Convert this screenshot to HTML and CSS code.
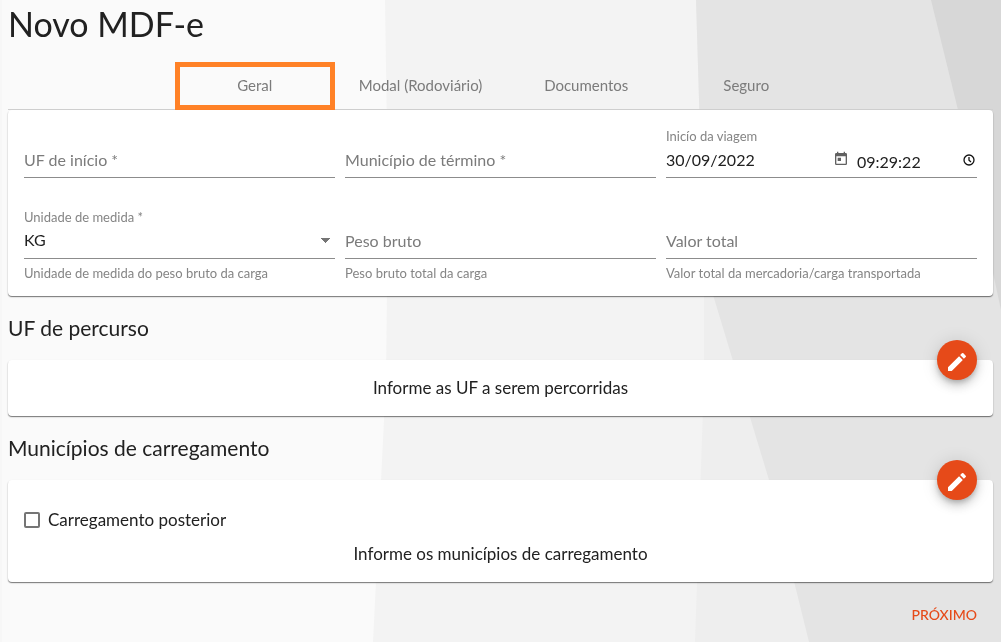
FILE: index.html
```html
<!DOCTYPE html>
<html lang="pt-BR">
<head>
<meta charset="utf-8">
<meta name="viewport" content="width=device-width, initial-scale=1">
<title>Novo MDF-e</title>
<link rel="stylesheet" href="styles.css">
</head>
<body>
<svg class="backdrop" viewBox="0 0 1001 642" preserveAspectRatio="none" aria-hidden="true">
  <rect width="1001" height="642" fill="#fafafa"/>
  <rect width="2" height="642" fill="#f7f7f7"/>
  <path fill="#f3f3f3" d="M385 0 388 200 386 380 373 642H1001V0Z"/>
  <path fill="#eeeeee" d="M696 0 704 265 704 380 695 642H1001V0Z"/>
  <path fill="#e4e4e4" d="M696 0 704 265 769 480 809 642H1001V0Z"/>
  <path fill="#d7d7d7" d="M931 0 958 110 1001 310V0Z"/>
</svg>
<main class="page">
  <h1 class="title">Novo MDF-e</h1>
  <nav class="tabs" role="tablist">
    <button class="tab tab-marked" type="button" role="tab" aria-selected="true">Geral</button>
    <button class="tab" type="button" role="tab">Modal (Rodoviário)</button>
    <button class="tab" type="button" role="tab">Documentos</button>
    <button class="tab" type="button" role="tab">Seguro</button>
  </nav>

  <form class="card fields">
    <div class="field">
      <div class="label"></div>
      <div class="control"><input class="input" type="text" placeholder="UF de início *" aria-label="UF de início" required></div>
    </div>
    <div class="field">
      <div class="label"></div>
      <div class="control"><input class="input" type="text" placeholder="Município de término *" aria-label="Município de término" required></div>
    </div>
    <div class="field">
      <label class="label" for="inicio">Inicío da viagem</label>
      <div class="control">
        <input class="input" id="inicio" type="text" value="30/09/2022">
        <button class="icon-button" type="button" aria-label="Abrir calendário">
          <svg width="16" height="16" viewBox="0 0 24 24" fill="#616161"><path d="M19 3h-1V1h-2v2H8V1H6v2H5a2 2 0 0 0-2 2v14a2 2 0 0 0 2 2h14a2 2 0 0 0 2-2V5a2 2 0 0 0-2-2zm0 16H5V8h14zM7 10h5v5H7z"/></svg>
        </button>
        <input class="input time" type="text" value="09:29:22" aria-label="Hora">
        <button class="icon-button" type="button" aria-label="Escolher hora">
          <svg width="16" height="16" viewBox="0 0 16 16" fill="none" stroke="#111" stroke-width="1.3"><circle cx="8" cy="9" r="5"/><path d="M8 6v3.2l2 1.8"/></svg>
        </button>
      </div>
    </div>
    <div class="field">
      <label class="label" for="unidade">Unidade de medida *</label>
      <div class="control">
        <select class="input select" id="unidade"><option>KG</option><option>TON</option></select>
      </div>
      <div class="hint">Unidade de medida do peso bruto da carga</div>
    </div>
    <div class="field">
      <div class="label"></div>
      <div class="control"><input class="input" type="text" placeholder="Peso bruto" aria-label="Peso bruto"></div>
      <div class="hint">Peso bruto total da carga</div>
    </div>
    <div class="field">
      <div class="label"></div>
      <div class="control"><input class="input" type="text" placeholder="Valor total" aria-label="Valor total"></div>
      <div class="hint">Valor total da mercadoria/carga transportada</div>
    </div>
  </form>

  <h2 class="subtitle">UF de percurso</h2>
  <section class="card">
    <button class="fab" type="button" aria-label="Editar UF de percurso">
      <svg width="24" height="24" viewBox="0 0 24 24" fill="#fff"><path d="M3 17.25V21h3.75L17.81 9.94l-3.75-3.75zM20.71 7.04a1 1 0 0 0 0-1.41l-2.34-2.34a1 1 0 0 0-1.41 0l-1.83 1.83 3.75 3.75z"/></svg>
    </button>
    <p class="empty">Informe as UF a serem percorridas</p>
  </section>

  <h2 class="subtitle">Municípios de carregamento</h2>
  <section class="card">
    <button class="fab" type="button" aria-label="Editar municípios de carregamento">
      <svg width="24" height="24" viewBox="0 0 24 24" fill="#fff"><path d="M3 17.25V21h3.75L17.81 9.94l-3.75-3.75zM20.71 7.04a1 1 0 0 0 0-1.41l-2.34-2.34a1 1 0 0 0-1.41 0l-1.83 1.83 3.75 3.75z"/></svg>
    </button>
    <label class="check"><input class="box" type="checkbox">Carregamento posterior</label>
    <p class="empty">Informe os municípios de carregamento</p>
  </section>

  <div class="actions"><button class="next" type="button">PRÓXIMO</button></div>
</main>
</body>
</html>
```
FILE: styles.css
```css
* { box-sizing: border-box; }
body {
  margin: 0;
  background: #fafafa;
  color: #212121;
  font: 16px/24px Lato, "Open Sans", sans-serif;
}
button, input, select { font: inherit; color: inherit; }
button { border: 0; background: none; padding: 0; cursor: pointer; }
.backdrop {
  position: fixed;
  inset: 0;
  width: 100%;
  height: 100%;
  z-index: -1;
}
.page { padding: 0 8px; }
.title {
  margin: 0;
  padding: 4px 0 18px;
  font-size: 34px;
  line-height: 40px;
  font-weight: 400;
}
.tabs {
  display: flex;
  justify-content: center;
  border-bottom: 1px solid #d0d0d0;
}
.tab {
  min-width: 160px;
  height: 48px;
  margin-bottom: -1px;
  padding: 0 24px 2px;
  font-size: 15px;
  color: #7b7b7b;
}
.tab-marked { border: 5px solid #ff8126; }
.card {
  position: relative;
  padding: 16px;
  background: #fff;
  border-radius: 4px;
  box-shadow: 0 1px 1px rgba(0, 0, 0, .45), 0 1px 2px rgba(0, 0, 0, .15);
}
.fields {
  display: grid;
  grid-template-columns: repeat(3, minmax(0, 1fr));
  gap: 29px 10px;
  padding-bottom: 13px;
}
.label, .hint {
  display: block;
  height: 20px;
  font-size: 13px;
  line-height: 20px;
  color: #858585;
  white-space: nowrap;
}
.hint { margin-top: 4px; }
.control {
  display: flex;
  align-items: center;
  height: 32px;
  padding-bottom: 5px;
  border-bottom: 1px solid #8c8c8c;
}
.input {
  flex: 1;
  min-width: 0;
  width: 100%;
  height: 26px;
  padding: 0;
  border: 0;
  outline: 0;
  background: transparent;
}
.input::placeholder { color: #7b7b7b; opacity: 1; }
.time { flex: 0 0 104px; margin-left: 8px; padding-top: 4px; }
.icon-button { display: flex; }
.select {
  appearance: none;
  background: linear-gradient(to top right, transparent 50%, #757575 50%) right 9px top 11px / 5px 5px no-repeat,
    linear-gradient(to top left, transparent 50%, #757575 50%) right 4px top 11px / 5px 5px no-repeat;
}
.subtitle {
  margin: 20px 0;
  font-size: 21px;
  line-height: 24px;
  font-weight: 400;
}
.empty { margin: 0; font-size: 17px; text-align: center; }
.fab {
  position: absolute;
  top: -20px;
  right: 16px;
  display: flex;
  align-items: center;
  justify-content: center;
  width: 40px;
  height: 40px;
  padding-top: 4px;
  border-radius: 50%;
  background: #e64a19;
  box-shadow: 0 3px 5px -1px rgba(0, 0, 0, .2), 0 6px 10px rgba(0, 0, 0, .14), 0 1px 18px rgba(0, 0, 0, .12);
}
.check {
  display: flex;
  align-items: center;
  gap: 8px;
  width: max-content;
  padding: 12px 0 10px;
  font-size: 17px;
}
.box {
  appearance: none;
  width: 16px;
  height: 16px;
  margin: 0;
  border: 2px solid #757575;
  border-radius: 2px;
}
.box:checked { background: #e64a19; border-color: #e64a19; }
.actions {
  display: flex;
  justify-content: flex-end;
  padding: 16px 16px 8px;
}
.next {
  height: 36px;
  padding-bottom: 2px;
  font-size: 14px;
  font-weight: 500;
  color: #e64a19;
}
```
